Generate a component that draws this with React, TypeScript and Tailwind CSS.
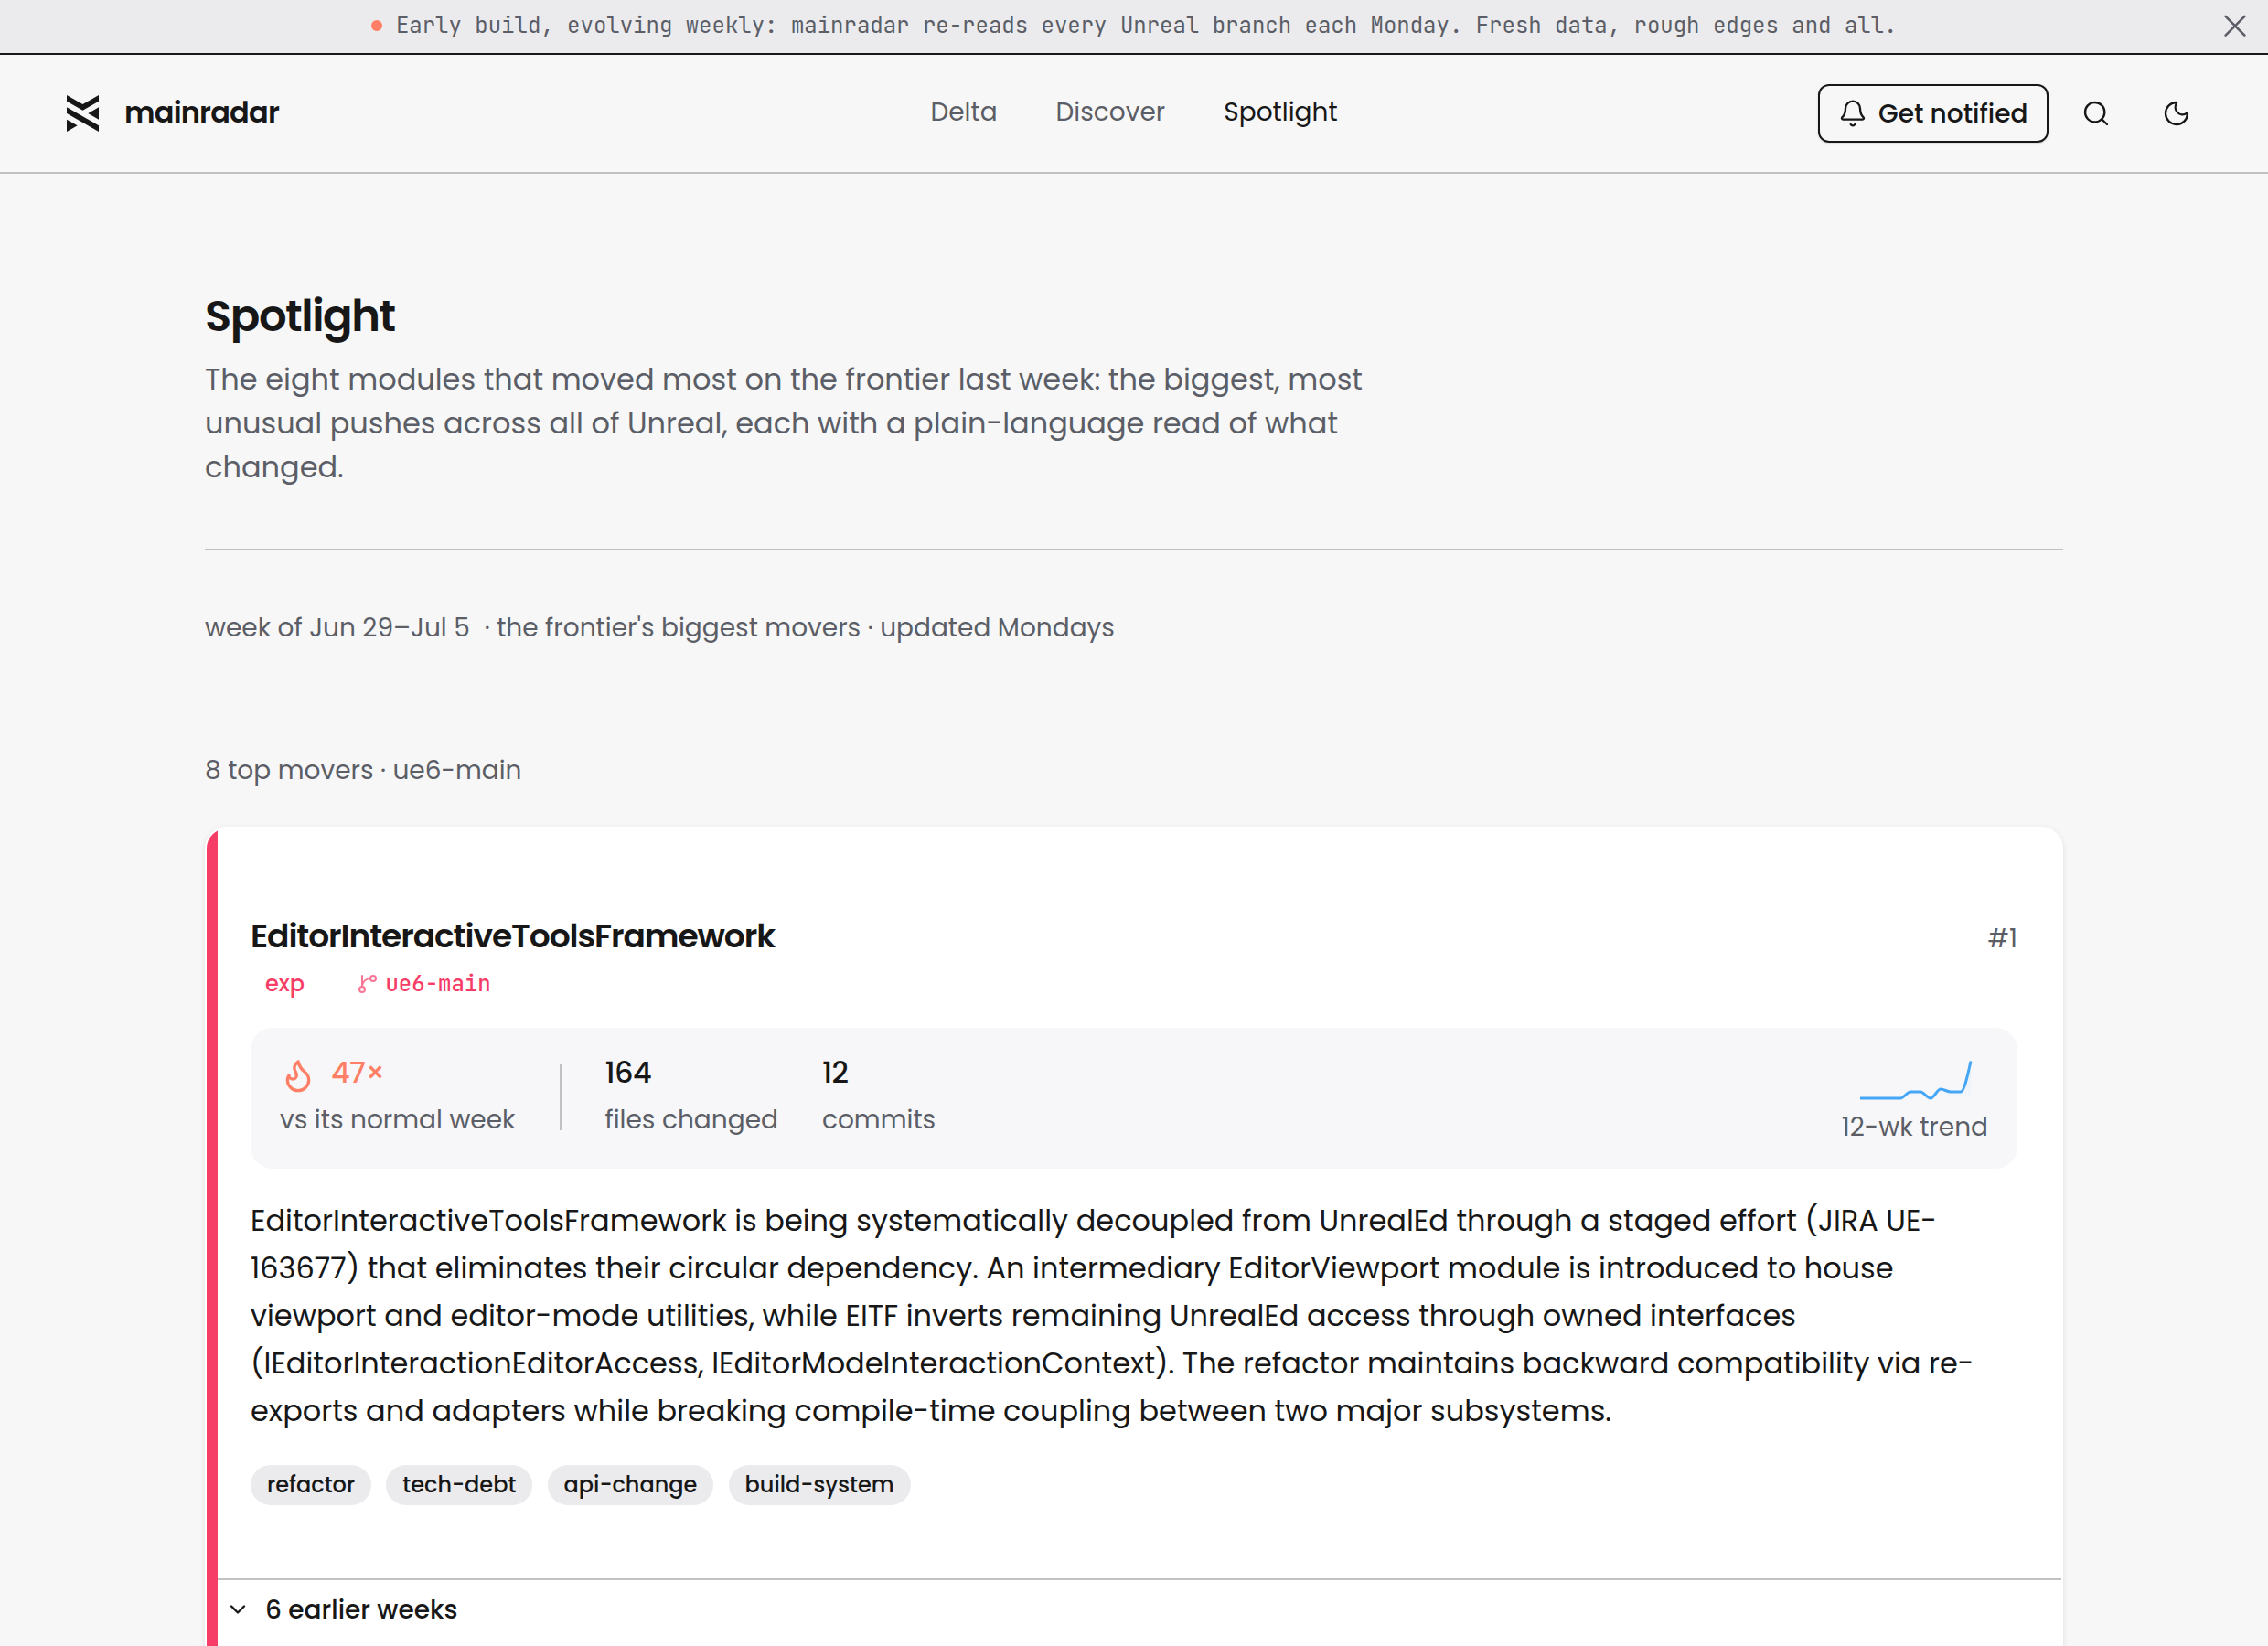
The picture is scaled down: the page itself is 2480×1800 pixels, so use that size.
import { Bell, ChevronDown, Flame, Moon, Search } from "lucide-react";

const intro = [
  "The eight modules that moved most on the frontier last week: the biggest, most",
  "unusual pushes across all of Unreal, each with a plain-language read of what",
  "changed.",
];
const summary = [
  "EditorInteractiveToolsFramework is being systematically decoupled from UnrealEd through a staged effort (JIRA UE-",
  "163677) that eliminates their circular dependency. An intermediary EditorViewport module is introduced to house",
  "viewport and editor-mode utilities, while EITF inverts remaining UnrealEd access through owned interfaces",
  "(IEditorInteractionEditorAccess, IEditorModeInteractionContext). The refactor maintains backward compatibility via re-",
  "exports and adapters while breaking compile-time coupling between two major subsystems.",
];
const tags = ["refactor", "tech-debt", "api-change", "build-system"];

function Banner() {
  return (
    <div className="relative flex h-[60px] items-center justify-center border-b-2 border-[#17171c] bg-[#ebebed] pb-[2px] font-['JetBrains_Mono','DejaVu_Sans_Mono',monospace] text-[24px] text-[#5b5e66]">
      <span className="mr-[15.4px] size-3 rounded-full bg-[#ff7f66]" />
      <span className="whitespace-nowrap">
        Early build, evolving weekly: mainradar re-reads every Unreal branch each Monday. Fresh data, rough edges and all.
      </span>
      <button className="absolute top-4 right-6 size-6" aria-label="Dismiss">
        <svg className="size-6 overflow-visible" viewBox="0 0 24 24" fill="none" stroke="currentColor" strokeWidth="2.6" strokeLinecap="round">
          <path d="M1.6 1.8L22.4 22.6M22.4 1.8L1.6 22.6" />
        </svg>
      </button>
    </div>
  );
}

function Logo() {
  return (
    <svg className="ml-[8.5px] h-10 w-[35px]" viewBox="0 0 105 120" fill="currentColor">
      <path d="M0 0L52.5 30L105 0V20L52.5 50L0 20Z" />
      <path d="M0 40L105 100V120L0 60Z" />
      <path d="M105 40V80L70 60Z" />
      <path d="M0 80V120L35 100Z" />
    </svg>
  );
}

function BranchIcon() {
  return (
    <svg className="size-6 opacity-70" viewBox="0 0 24 24" fill="none" stroke="currentColor" strokeWidth="2" strokeLinecap="round" strokeLinejoin="round">
      <path d="M15 6a9 9 0 0 0-9 9V3" />
      <circle cx="18" cy="6" r="3" />
      <circle cx="6" cy="18" r="3" />
    </svg>
  );
}

function Header() {
  return (
    <header className="grid h-[130px] grid-cols-[1fr_auto_1fr] items-center border-b-2 border-[#c0c1c1] px-16">
      <div className="flex items-center">
        <Logo />
        <span className="ml-[28.5px] pb-[2px] text-[32px] leading-[48px] font-semibold tracking-[-0.025em]">mainradar</span>
      </div>
      <nav className="flex gap-16 pb-[2px] text-[28px] leading-[42px] text-[#5b5e66]">
        <span>Delta</span>
        <span>Discover</span>
        <span className="text-[#171717]">Spotlight</span>
      </nav>
      <div className="flex items-center justify-end gap-4">
        <button className="flex h-16 w-[252px] items-center gap-3 rounded-[12px] border-2 border-[#171717] pl-5 text-[28px] font-medium shadow-sm">
          <Bell size={32} strokeWidth={1.75} />
          <span className="pt-[2px] whitespace-nowrap">Get notified</span>
        </button>
        <button className="flex size-[72px] items-center justify-center" aria-label="Search">
          <Search size={32} strokeWidth={1.75} />
        </button>
        <button className="flex size-[72px] items-center justify-center" aria-label="Theme">
          <Moon size={32} strokeWidth={1.75} />
        </button>
      </div>
    </header>
  );
}

function Trend() {
  const line =
    "M0 41H44C47.7 41 51.3 34 55 34H66C69.7 34 73.3 41 77 41C80.7 41 84.3 31 88 31C91.7 31 95.3 34 99 34H110C113.7 34 117.3 17.3 121 0.5";
  return (
    <svg className="mr-[19px] h-[43px] w-[121px] overflow-visible" viewBox="0 0 121 43" fill="none">
      <defs>
        <linearGradient id="trend" x1="0" y1="0" x2="0" y2="1">
          <stop offset="0" stopColor="#42a5f5" stopOpacity="0.12" />
          <stop offset="1" stopColor="#42a5f5" stopOpacity="0" />
        </linearGradient>
      </defs>
      <path d={line + "V43H0Z"} fill="url(#trend)" />
      <path d={line} stroke="#45a6f6" strokeWidth="3" />
    </svg>
  );
}

function Stat({ value, label }: { value: string; label: string }) {
  return (
    <div className="flex flex-col pb-[1px]">
      <div className="h-[50px] text-[32px] leading-[48px] font-medium tracking-[-0.02em] text-[#171717]">{value}</div>
      <div className="leading-[52px]">{label}</div>
    </div>
  );
}

function Stats() {
  return (
    <div className="mt-[26px] flex h-[154px] items-center rounded-[24px] bg-[#f7f7f9] px-8 pb-[2px] text-[28px] text-[#5b5e66]">
      <div className="flex flex-col pb-[1px]">
        <div className="flex h-[50px] items-center gap-4 text-[32px] leading-[48px] font-medium tracking-[-0.02em] text-[#ff7f66]">
          <Flame size={40} strokeWidth={2} className="mt-[5px]" />
          <span className="pb-[2px]">47×</span>
        </div>
        <div className="leading-[52px]">vs its normal week</div>
      </div>
      <div className="mr-[47.5px] ml-[48.5px] h-[72px] w-[2px] bg-[#c0c1c1]" />
      <Stat value="164" label="files changed" />
      <div className="w-12" />
      <Stat value="12" label="commits" />
      <div className="ml-auto flex flex-col items-end pt-[13.5px]">
        <Trend />
        <div className="mt-[9.5px] leading-[42px]">12-wk trend</div>
      </div>
    </div>
  );
}

function Card() {
  return (
    <article className="mt-[40px] flex h-[960px] overflow-hidden rounded-[24px] border-2 border-white bg-white shadow-[0_2px_6px_rgba(0,0,0,0.1)]">
      <div className="w-3 shrink-0 bg-[#f63d68]" />
      <div className="flex-1">
        <div className="px-9 pt-[93px] pr-12">
          <div className="flex items-baseline justify-between">
            <h2 className="text-[36px] leading-[50px] font-semibold tracking-[-0.03em]">EditorInteractiveToolsFramework</h2>
            <span className="text-[28px] leading-[42px] text-[#5b5e66]">#1</span>
          </div>
          <div className="mt-[5px] flex h-[44px] items-center text-[24px] leading-[36px] font-medium text-[#f63d68]">
            <span className="px-4">exp</span>
            <span className="ml-[41px] flex items-center gap-[7.4px] font-['JetBrains_Mono','DejaVu_Sans_Mono',monospace]">
              <BranchIcon />
              ue6-main
            </span>
          </div>
          <Stats />
          <div className="mt-[31px] text-[32px] leading-[52px] text-[#171717]">
            {summary.map((line) => (
              <p key={line} className="whitespace-nowrap">{line}</p>
            ))}
          </div>
          <div className="mt-[33px] flex gap-[16.2px]">
            {tags.map((tag) => (
              <span key={tag} className="h-11 rounded-full bg-[#ebebed] px-[18px] text-[24px] leading-[44px] font-medium">{tag}</span>
            ))}
          </div>
        </div>
        <div className="mt-20 flex h-[66px] items-center gap-4 border-t-2 border-[#c0c1c1] pl-2 text-[28px] font-medium">
          <ChevronDown size={28} strokeWidth={2} />
          <span className="pt-[2px]">6 earlier weeks</span>
        </div>
      </div>
    </article>
  );
}

export default function App() {
  return (
    <div className="h-[1800px] w-full overflow-hidden bg-[#f7f7f7] font-['Poppins','Inter',sans-serif] text-[#171717]">
      <Banner />
      <Header />
      <main className="mx-auto w-[2032px] pt-32">
        <h1 className="text-[48px] leading-[56px] font-semibold tracking-[-0.03em]">Spotlight</h1>
        <div className="mt-[17px] text-[32px] leading-[48px] text-[#5b5e66]">
          {intro.map((line) => (
            <p key={line} className="whitespace-nowrap">{line}</p>
          ))}
        </div>
        <div className="mt-[65px] border-t-2 border-[#c0c1c1]" />
        <p className="mt-16 text-[28px] leading-[42px] whitespace-nowrap text-[#5b5e66]">
          <span className="mr-[16px]">week of Jun 29–Jul 5</span>
          <span>· the frontier's biggest movers · updated Mondays</span>
        </p>
        <p className="mt-[114px] text-[28px] leading-[42px] text-[#5b5e66]">8 top movers · ue6-main</p>
        <Card />
      </main>
    </div>
  );
}
